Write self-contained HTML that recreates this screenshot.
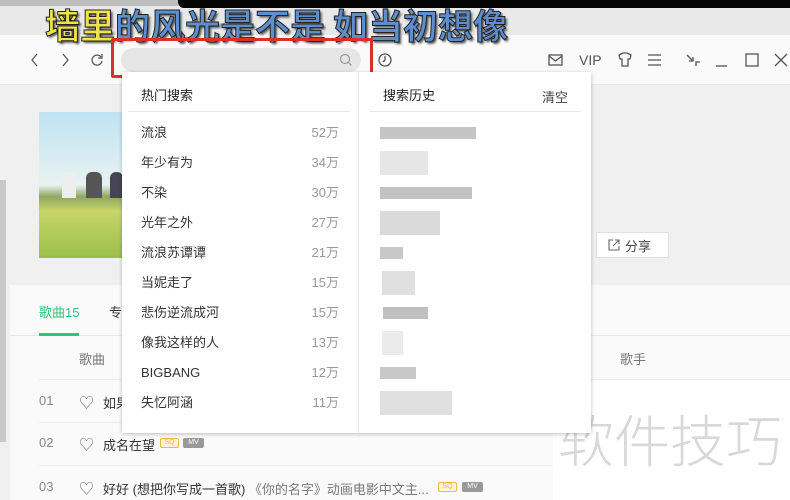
<!DOCTYPE html>
<html><head><meta charset="utf-8"><style>
*{margin:0;padding:0;box-sizing:border-box}
body{width:790px;height:500px;overflow:hidden;position:relative;background:#f0f0f0;font-family:"Liberation Sans","Noto Sans CJK SC",sans-serif;color:#333}
.a{position:absolute}
.t{font-size:13px;white-space:nowrap}
</style></head><body>
<div class="a" style="left:0;top:0;width:790px;height:36px;background:#e9e9e9"></div>
<div class="a" style="left:178px;top:0;width:612px;height:8px;background:#050505;border-radius:0 0 0 6px"></div>
<div class="a" style="left:0;top:0;width:178px;height:6px;background:#bdbdbd"></div>
<div class="a" style="left:0;top:35px;width:790px;height:50px;background:#fafafa;border-bottom:1px solid #e6e6e6"></div>
<div class="a" style="left:45px;top:-1px;font-size:35px;font-weight:bold;white-space:nowrap;letter-spacing:0;font-family:'Noto Sans CJK SC',sans-serif;-webkit-text-stroke:1px #222;text-shadow:2px 2px 2px #555"><span style="color:#f1e24a">墙里</span><span style="color:#5d8fcf">的风光是不是 如当初想像</span></div>
<svg class="a" style="left:0;top:35px" width="790" height="50" fill="none" stroke="#555" stroke-width="1.3">
<path d="M37 19l-5 6 5 6"/>
<path d="M63 19l5 6-5 6"/>
<path d="M101 22a5 5 0 1 0 1 4M102 19v4h-4"/>
<circle cx="385" cy="25" r="6"/><path d="M385 21v4l-2 2"/>
<rect x="549" y="20" width="13" height="10"/><path d="M549 21l6.5 5 6.5-5"/>
<path d="M619 20l4-2h4l4 2-1 4h-2v7h-6v-7h-2z"/>
<path d="M648 20h13M648 25h13M648 30h13"/>
<path d="M687 20l6 6M693 22v4h-4M696 31v-4h4"/>
<path d="M716 31h11"/>
<rect x="746" y="19" width="12" height="12"/>
<path d="M775 19l12 12M787 19l-12 12"/>
</svg>
<div class="a t" style="left:579px;top:52px;font-size:14px;color:#555">VIP</div>
<div class="a" style="left:121px;top:48px;width:240px;height:24px;background:#e6e6e6;border-radius:12px"></div>
<svg class="a" style="left:339px;top:53px" width="14" height="14" fill="none" stroke="#999" stroke-width="1.2"><circle cx="6" cy="6" r="4.5"/><path d="M9.5 9.5l3 3"/></svg>
<div class="a" style="left:111px;top:38px;width:262px;height:40px;border:3px solid #d8312b;border-radius:2px"></div>
<div class="a" style="left:0;top:180px;width:6px;height:262px;background:#c8c8c8"></div>
<div class="a" style="left:39px;top:112px;width:84px;height:146px;background:linear-gradient(#bfe3f3 0%,#e8f2f2 50%,#8fa660 58%,#c8d66a 68%,#9bbf4a 100%)"></div>
<div class="a" style="left:62px;top:172px;width:14px;height:26px;background:#eee;border-radius:6px 6px 0 0"></div>
<div class="a" style="left:86px;top:172px;width:16px;height:26px;background:#555;border-radius:6px 6px 0 0"></div>
<div class="a" style="left:110px;top:172px;width:13px;height:26px;background:#445;border-radius:6px 6px 0 0"></div>
<div class="a" style="left:596px;top:232px;width:73px;height:26px;background:#fff;border:1px solid #e0e0e0"></div>
<svg class="a" style="left:607px;top:238px" width="14" height="14" fill="none" stroke="#666" stroke-width="1.1"><path d="M6 2H2v10h10V8M8 2h4v4M12 2L6 8"/></svg>
<div class="a t" style="left:625px;top:236px;color:#444">分享</div>
<div class="a" style="left:10px;top:285px;width:780px;height:215px;background:#fafafa"></div>
<div class="a" style="left:10px;top:335px;width:780px;height:1px;background:#e8e8e8"></div>
<div class="a t" style="left:39px;top:302px;color:#31c27c">歌曲15</div>
<div class="a" style="left:39px;top:333px;width:40px;height:3px;background:#31c27c"></div>
<div class="a t" style="left:109px;top:302px">专</div>
<div class="a t" style="left:79px;top:349px;color:#777">歌曲</div>
<div class="a t" style="left:620px;top:349px;color:#777">歌手</div>
<div class="a" style="left:39px;top:379px;width:751px;height:1px;background:#eee"></div>
<div class="a" style="left:39px;top:422px;width:514px;height:1px;background:#eee"></div>
<div class="a" style="left:39px;top:465px;width:514px;height:1px;background:#eee"></div>
<div class="a t" style="left:39px;top:393px;color:#888">01</div>
<div class="a t" style="left:39px;top:435px;color:#888">02</div>
<div class="a t" style="left:39px;top:479px;color:#888">03</div>
<div class="a t" style="left:79px;top:392px;color:#777;font-size:15px">♡</div>
<div class="a t" style="left:79px;top:434px;color:#777;font-size:15px">♡</div>
<div class="a t" style="left:79px;top:478px;color:#777;font-size:15px">♡</div>
<div class="a t" style="left:103px;top:393px">如果</div>
<div class="a t" style="left:103px;top:435px">成名在望</div>
<div class="a" style="left:160px;top:438px;width:19px;height:10px;border:1px solid #e9b94c;border-radius:2px;background:#fff4d6;font-size:7px;color:#e9b94c;text-align:center;line-height:8px">SQ</div>
<div class="a" style="left:183px;top:438px;width:21px;height:10px;background:#999;border-radius:2px;font-size:7px;color:#fff;text-align:center;line-height:10px">MV</div>
<div class="a t" style="left:103px;top:479px">好好 (想把你写成一首歌) <span style="color:#777">《你的名字》动画电影中文主...</span></div>
<div class="a" style="left:438px;top:482px;width:19px;height:10px;border:1px solid #e9b94c;border-radius:2px;background:#fff4d6;font-size:7px;color:#e9b94c;text-align:center;line-height:8px">SQ</div>
<div class="a" style="left:462px;top:482px;width:21px;height:10px;background:#999;border-radius:2px;font-size:7px;color:#fff;text-align:center;line-height:10px">MV</div>
<div class="a" style="left:553px;top:381px;width:237px;height:119px;background:#fff"></div>
<div class="a" style="left:558px;top:398px;font-size:56px;color:#d8d8d8;white-space:nowrap;font-family:'Noto Sans CJK SC',sans-serif;font-weight:300">软件技巧</div>
<div class="a" style="left:122px;top:72px;width:469px;height:361px;background:#fff;box-shadow:0 1px 4px rgba(0,0,0,.25)"></div>
<div class="a" style="left:358px;top:72px;width:1px;height:361px;background:#e5e5e5"></div>
<div class="a t" style="left:141px;top:85px;color:#222">热门搜索</div>
<div class="a" style="left:128px;top:111px;width:222px;height:1px;background:#e8e8e8"></div>
<div class="a t" style="left:383px;top:85px;color:#222">搜索历史</div>
<div class="a t" style="left:542px;top:87px;color:#444">清空</div>
<div class="a" style="left:369px;top:111px;width:212px;height:1px;background:#e8e8e8"></div>
<div class="a" style="left:141px;top:118px;width:198px;font-size:13px;line-height:30px;color:#333">
<div>流浪<span style="float:right;color:#999">52万</span></div>
<div>年少有为<span style="float:right;color:#999">34万</span></div>
<div>不染<span style="float:right;color:#999">30万</span></div>
<div>光年之外<span style="float:right;color:#999">27万</span></div>
<div>流浪苏谭谭<span style="float:right;color:#999">21万</span></div>
<div>当妮走了<span style="float:right;color:#999">15万</span></div>
<div>悲伤逆流成河<span style="float:right;color:#999">15万</span></div>
<div>像我这样的人<span style="float:right;color:#999">13万</span></div>
<div>BIGBANG<span style="float:right;color:#999">12万</span></div>
<div>失忆阿涵<span style="float:right;color:#999">11万</span></div>
</div>
<div class="a" style="left:380px;top:127px;width:96px;height:12px;background:#c4c4c4"></div>
<div class="a" style="left:380px;top:151px;width:48px;height:24px;background:#e6e6e6"></div>
<div class="a" style="left:380px;top:187px;width:92px;height:12px;background:#c2c2c2"></div>
<div class="a" style="left:380px;top:211px;width:60px;height:24px;background:#dadada"></div>
<div class="a" style="left:380px;top:247px;width:23px;height:12px;background:#c8c8c8"></div>
<div class="a" style="left:382px;top:271px;width:33px;height:24px;background:#e0e0e0"></div>
<div class="a" style="left:383px;top:307px;width:45px;height:12px;background:#c0c0c0"></div>
<div class="a" style="left:382px;top:331px;width:21px;height:24px;background:#ebebeb"></div>
<div class="a" style="left:380px;top:367px;width:36px;height:12px;background:#c8c8c8"></div>
<div class="a" style="left:380px;top:391px;width:72px;height:24px;background:#e0e0e0"></div>
</body></html>
